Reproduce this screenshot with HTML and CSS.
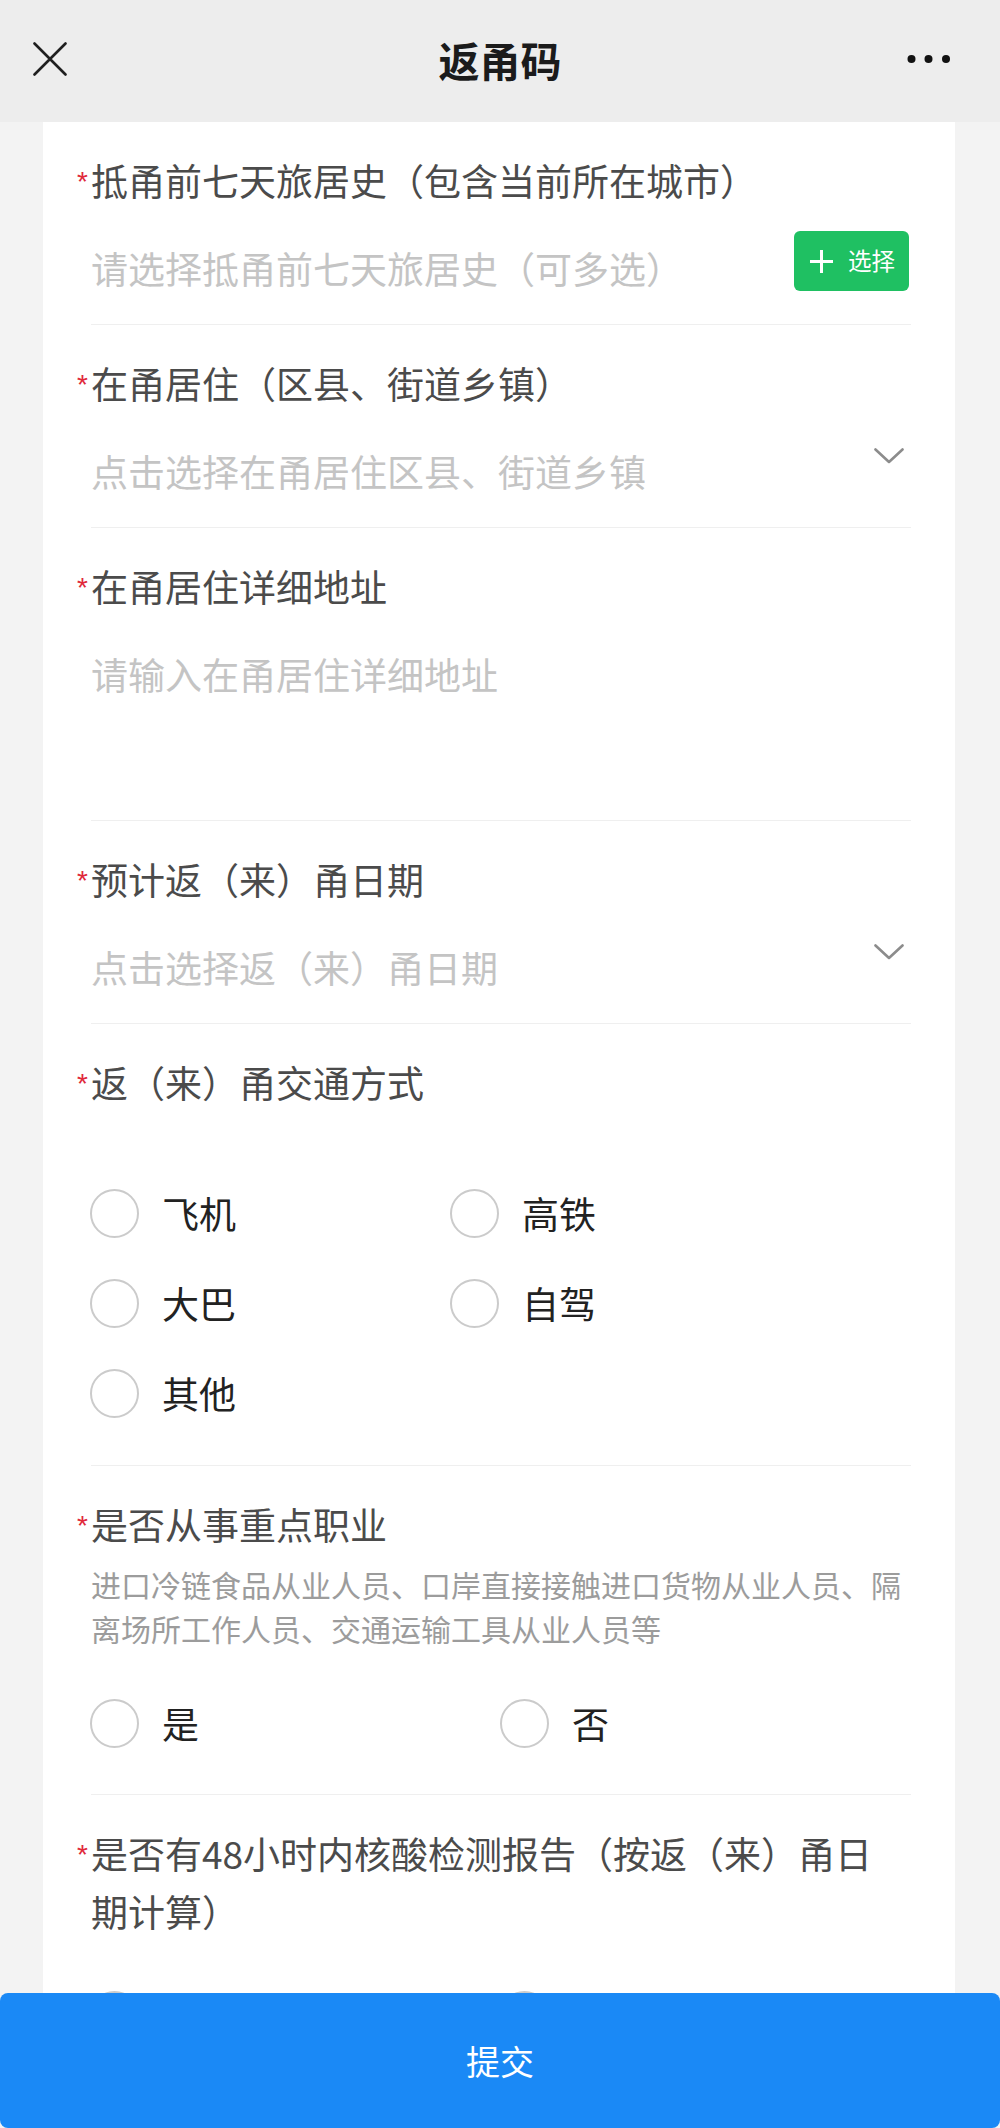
FILE: index.html
```html
<!DOCTYPE html>
<html lang="zh-CN">
<head>
<meta charset="utf-8">
<title>返甬码</title>
<link rel="stylesheet" href="styles.css">
</head>
<body>
<div class="page">
  <header class="nav">
    <div class="nav-left">
      <svg class="icon-close" width="34" height="34" viewBox="0 0 34 34"><path d="M1.5 1.5 L32.5 32.5 M32.5 1.5 L1.5 32.5" stroke="#1f1f1f" stroke-width="2.6" fill="none" stroke-linecap="round"/></svg>
    </div>
    <h1 class="nav-title">返甬码</h1>
    <div class="nav-right">
      <svg class="icon-more" width="44" height="10" viewBox="0 0 44 10"><circle cx="4.5" cy="5" r="4" fill="#111"/><circle cx="21.5" cy="5" r="4" fill="#111"/><circle cx="39" cy="5" r="4" fill="#111"/></svg>
    </div>
  </header>

  <main class="card">
    <section class="field">
      <div class="label"><span class="req">*</span>抵甬前七天旅居史（包含当前所在城市）</div>
      <div class="input-row">
        <span class="placeholder">请选择抵甬前七天旅居史（可多选）</span>
        <span class="btn-select">
          <svg width="23" height="23" viewBox="0 0 23 23"><path d="M11.5 0 V23 M0 11.5 H23" stroke="#fff" stroke-width="3" fill="none"/></svg>
          <span>选择</span>
        </span>
      </div>
    </section>

    <section class="field">
      <div class="label"><span class="req">*</span>在甬居住（区县、街道乡镇）</div>
      <div class="input-row">
        <span class="placeholder">点击选择在甬居住区县、街道乡镇</span>
        <svg class="chevron" width="30" height="16" viewBox="0 0 30 16"><path d="M1.5 1.5 L15 14 L28.5 1.5" stroke="#8c8c8c" stroke-width="2.6" fill="none" stroke-linecap="round" stroke-linejoin="round"/></svg>
      </div>
    </section>

    <section class="field">
      <div class="label"><span class="req">*</span>在甬居住详细地址</div>
      <div class="textarea">请输入在甬居住详细地址</div>
    </section>

    <section class="field">
      <div class="label"><span class="req">*</span>预计返（来）甬日期</div>
      <div class="input-row">
        <span class="placeholder">点击选择返（来）甬日期</span>
        <svg class="chevron" width="30" height="16" viewBox="0 0 30 16"><path d="M1.5 1.5 L15 14 L28.5 1.5" stroke="#8c8c8c" stroke-width="2.6" fill="none" stroke-linecap="round" stroke-linejoin="round"/></svg>
      </div>
    </section>

    <section class="field">
      <div class="label"><span class="req">*</span>返（来）甬交通方式</div>
      <div class="radios radios-transport">
        <div class="radio"><span class="radio-circle"></span>飞机</div>
        <div class="radio"><span class="radio-circle"></span>高铁</div>
        <div class="radio"><span class="radio-circle"></span>大巴</div>
        <div class="radio"><span class="radio-circle"></span>自驾</div>
        <div class="radio"><span class="radio-circle"></span>其他</div>
      </div>
    </section>

    <section class="field field-job">
      <div class="label"><span class="req">*</span>是否从事重点职业</div>
      <p class="desc">进口冷链食品从业人员、口岸直接接触进口货物从业人员、隔离场所工作人员、交通运输工具从业人员等</p>
      <div class="radios radios-yn">
        <div class="radio"><span class="radio-circle"></span>是</div>
        <div class="radio"><span class="radio-circle"></span>否</div>
      </div>
    </section>

    <section class="field field-last">
      <div class="label"><span class="req">*</span>是否有48小时内核酸检测报告（按返（来）甬日<br>期计算）</div>
      <div class="radios radios-yn">
        <div class="radio"><span class="radio-circle"></span>是</div>
        <div class="radio"><span class="radio-circle"></span>否</div>
      </div>
    </section>
  </main>

  <div class="submit-bar">提交</div>
</div>
</body>
</html>
```

FILE: styles.css
```css
* {
  box-sizing: border-box;
  margin: 0;
  padding: 0;
}

html,
body {
  height: 100%;
}

body {
  background: #f3f3f3;
  font-family: "Noto Sans CJK SC", "Noto Sans", sans-serif;
  color: #333;
  overflow: hidden;
}

.page {
  height: 2128px;
  overflow: hidden;
  display: flex;
  flex-direction: column;
}

/* Navigation bar */
.nav {
  flex: none;
  height: 122px;
  background: #ededed;
  display: grid;
  grid-template-columns: 1fr auto 1fr;
  align-items: center;
  padding-bottom: 4px;
}

.nav-left {
  display: flex;
  padding-left: 33px;
}

.nav-title {
  font-size: 41px;
  font-weight: 700;
  line-height: 1;
  color: #1b1b1b;
}

.nav-right {
  display: flex;
  justify-content: flex-end;
  padding-right: 49px;
}

.icon-close,
.icon-more {
  display: block;
}

/* Card */
.card {
  flex: 1;
  margin: 0 45px 0 43px;
  background: #fff;
  padding: 0 44px 0 48px;
}

.field {
  padding: 29px 0 27px;
  border-bottom: 1px solid #efefef;
}

.label {
  font-size: 37px;
  line-height: 58px;
  color: #4b4b4b;
}

.req {
  display: inline-block;
  width: 14px;
  margin-left: -14px;
  font-family: "Liberation Sans", sans-serif;
  font-size: 28px;
  line-height: 1;
  color: #e0283a;
  vertical-align: 5px;
}

.input-row {
  margin-top: 30px;
  height: 58px;
  display: flex;
  align-items: flex-start;
}

.placeholder {
  flex: 1;
  font-size: 37px;
  line-height: 58px;
  color: #c4c4c4;
  white-space: nowrap;
}

.textarea {
  margin-top: 30px;
  height: 148px;
  font-size: 37px;
  line-height: 58px;
  color: #c4c4c4;
}

.chevron {
  flex: none;
  display: block;
  margin-top: 6px;
  margin-right: 7px;
}

.btn-select {
  flex: none;
  width: 115px;
  height: 60px;
  margin-top: -8px;
  margin-right: 2px;
  background: #1fc062;
  border-radius: 6px;
  display: flex;
  align-items: center;
  padding-left: 16px;
  gap: 15px;
  color: #fff;
  font-size: 23.5px;
  line-height: 1;
}

.btn-select svg {
  display: block;
}

/* Radios */
.radios {
  display: grid;
  margin-top: 57px;
}

.radios-transport {
  grid-template-columns: 360px 1fr;
}

.radios-yn {
  grid-template-columns: 410px 1fr;
}

.field-job .radios {
  margin-top: 28px;
}

.field-job {
  padding-bottom: 26px;
}

.field-last {
  border-bottom: none;
}

.field-last .radios {
  margin-top: 30px;
}

.radio {
  height: 90px;
  display: flex;
  align-items: center;
  gap: 23px;
  font-size: 37px;
  color: #222;
}

.radio-circle {
  flex: none;
  width: 49px;
  height: 49px;
  border: 2px solid #cbcbcb;
  border-radius: 50%;
  margin-left: -1px;
}

.desc {
  margin-top: 9px;
  font-size: 30px;
  line-height: 44px;
  color: #9c9c9c;
}

/* Submit bar (fixed overlay) */
.submit-bar {
  position: fixed;
  left: 0;
  right: 0;
  bottom: 0;
  height: 135px;
  background: #1a89f6;
  border-radius: 8px;
  display: flex;
  align-items: center;
  justify-content: center;
  color: #fff;
  font-size: 34px;
}
```
